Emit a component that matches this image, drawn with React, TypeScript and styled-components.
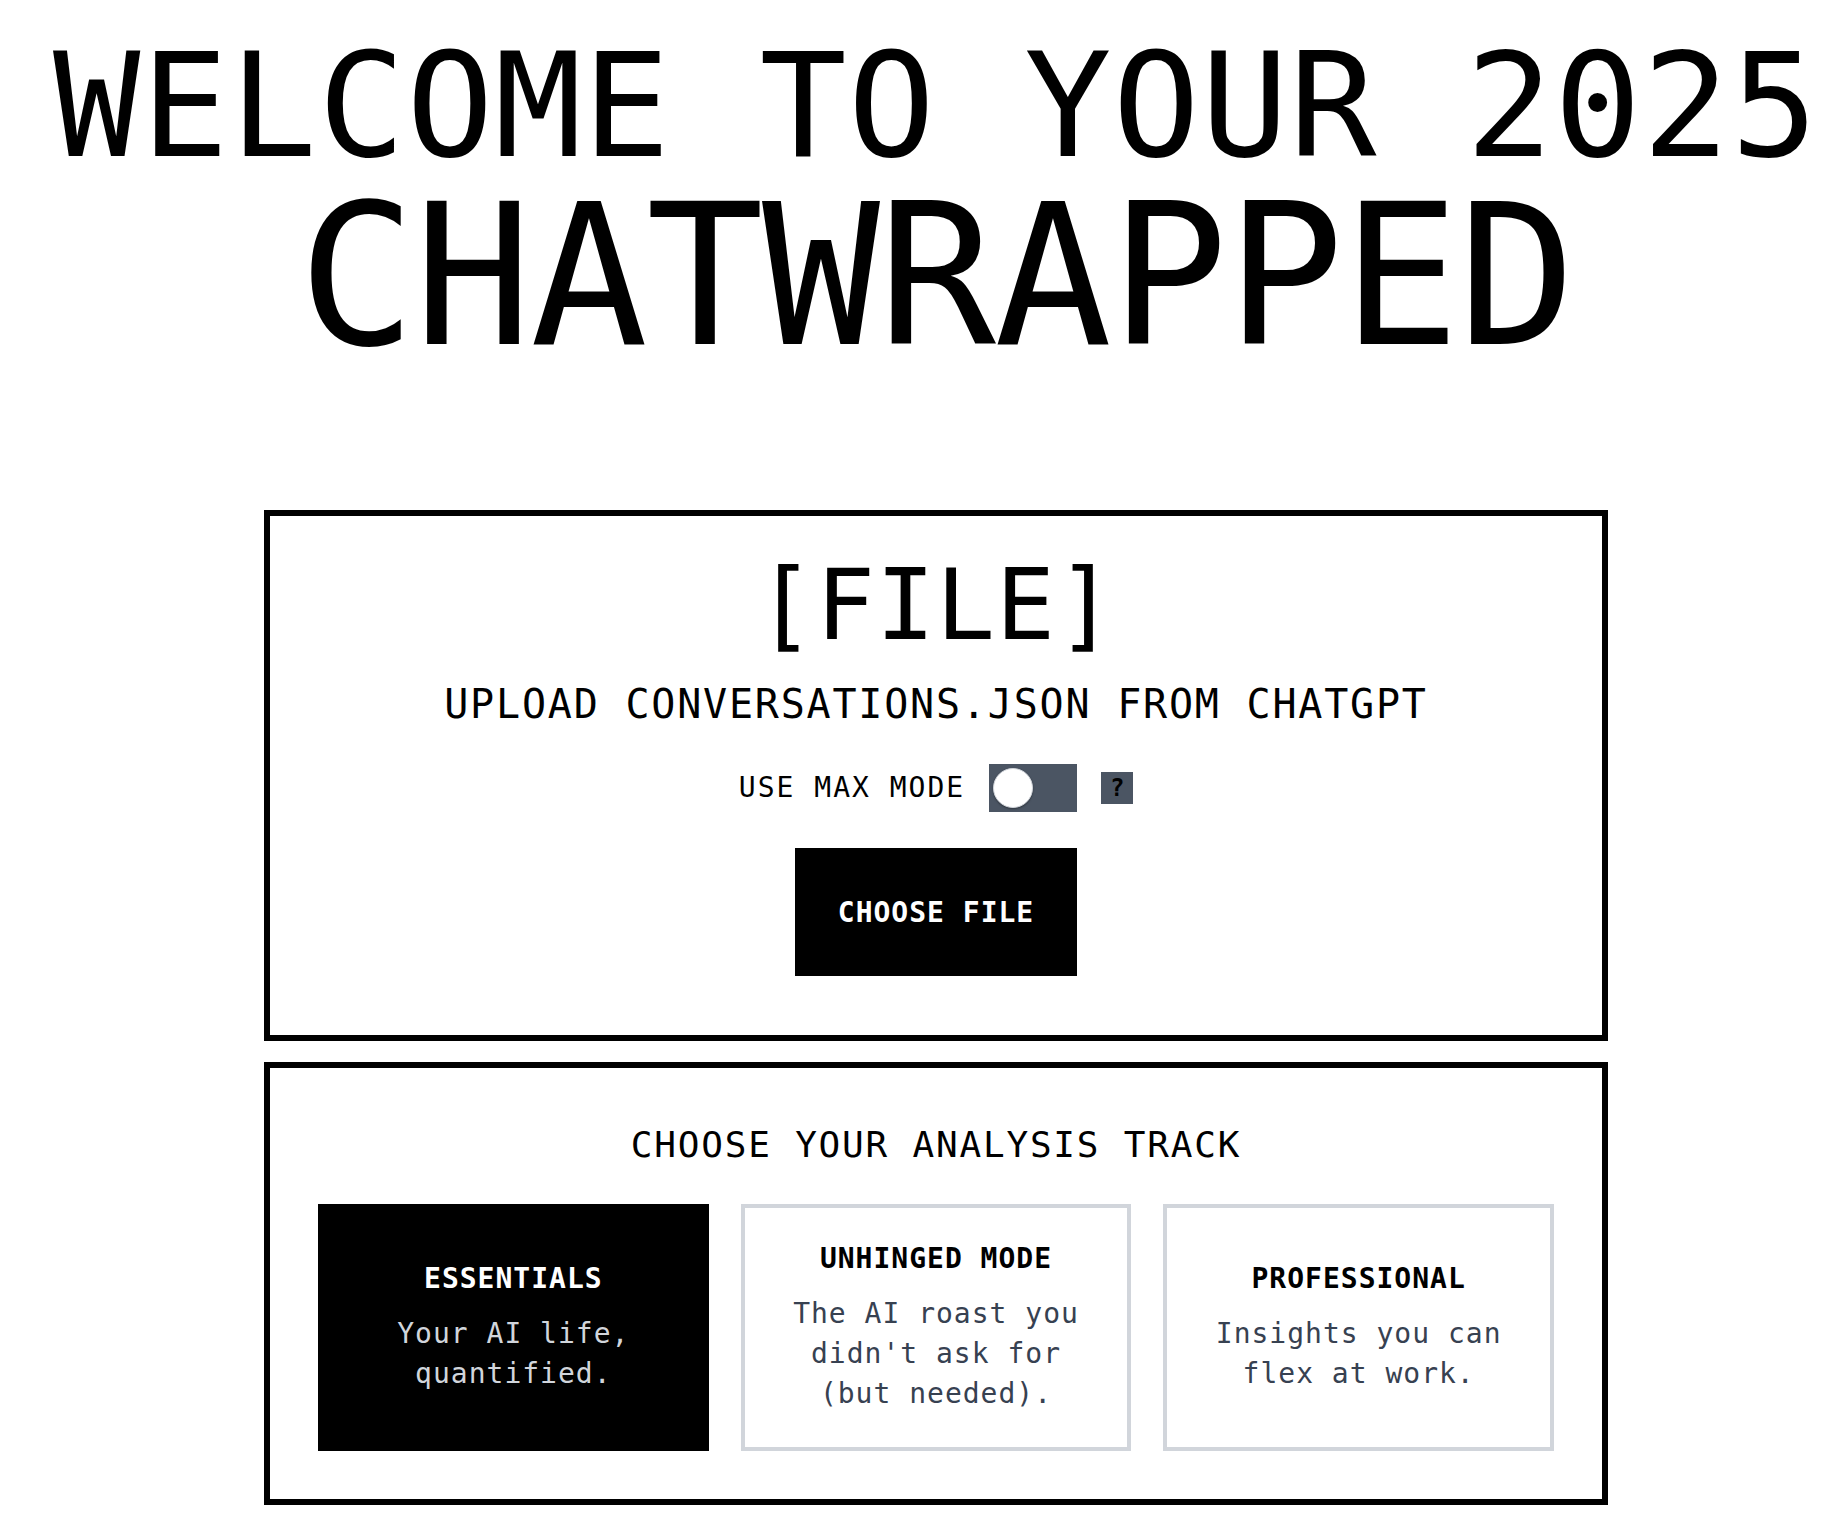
import React from "react";
import styled, { createGlobalStyle } from "styled-components";

const GlobalStyle = createGlobalStyle`
  html, body {
    margin: 0;
    padding: 0;
    background: #ffffff;
  }
  body {
    font-family: "DejaVu Sans Mono", "Liberation Mono", monospace;
    color: #000000;
  }
  * { box-sizing: border-box; }
`;

const Page = styled.div`
  display: flex;
  flex-direction: column;
  align-items: center;
  padding: 35px 0 17px 38px;
`;

const Title = styled.h1`
  margin: 0;
  font-weight: 400;
  text-align: center;
  white-space: nowrap;
  display: flex;
  flex-direction: column;
  align-items: center;
  gap: 2px;
`;

const TitleLine = styled.span<{ $size: number; $spacing: number; $lh: number }>`
  display: block;
  font-size: ${(p) => p.$size}px;
  line-height: ${(p) => p.$lh}px;
  letter-spacing: ${(p) => p.$spacing}px;
`;

const Main = styled.main`
  width: 1344px;
  margin-top: 136px;
  display: flex;
  flex-direction: column;
  gap: 21px;
`;

const Panel = styled.section<{ $pad: string }>`
  border: 6px solid #000;
  padding: ${(p) => p.$pad};
  display: flex;
  flex-direction: column;
  align-items: center;
  text-align: center;
`;

const FileGlyph = styled.div`
  font-size: 98px;
  line-height: 1;
  letter-spacing: 1px;
`;

const UploadText = styled.p`
  margin: 20px 0 0;
  font-size: 40px;
  line-height: 60px;
  letter-spacing: 1.8px;
`;

const ModeRow = styled.div`
  margin-top: 30px;
  display: flex;
  align-items: center;
  gap: 24px;
`;

const ModeLabel = styled.span`
  font-size: 28px;
  line-height: 1;
  letter-spacing: 2px;
`;

const Toggle = styled.button`
  width: 88px;
  height: 48px;
  padding: 0 4px;
  border: none;
  background: #4b5563;
  display: flex;
  align-items: center;
  cursor: pointer;
`;

const Knob = styled.span`
  width: 40px;
  height: 40px;
  border-radius: 50%;
  background: #ffffff;
  border: 1px solid #d1d5db;
  box-shadow: 0 1px 2px rgba(0, 0, 0, 0.35);
`;

const HelpBadge = styled.span`
  width: 32px;
  height: 32px;
  background: #4b5563;
  color: #000;
  display: flex;
  align-items: center;
  justify-content: center;
  font-size: 24px;
  font-weight: 700;
  line-height: 1;
`;

const ChooseButton = styled.button`
  margin-top: 36px;
  height: 128px;
  padding: 0 43px;
  border: none;
  background: #000;
  color: #fff;
  font-family: inherit;
  font-size: 28px;
  font-weight: 700;
  letter-spacing: 1px;
  cursor: pointer;
`;

const SectionHeading = styled.h2`
  margin: 0;
  font-weight: 400;
  font-size: 36px;
  line-height: 54px;
  letter-spacing: 1.8px;
`;

const TrackGrid = styled.div`
  margin-top: 32px;
  width: 100%;
  display: grid;
  grid-template-columns: repeat(3, 1fr);
  gap: 32px;
`;

const TrackCard = styled.button<{ $active?: boolean }>`
  border: 4px solid ${(p) => (p.$active ? "#000" : "#d1d5db")};
  background: ${(p) => (p.$active ? "#000" : "#fff")};
  color: ${(p) => (p.$active ? "#fff" : "#000")};
  padding: 33px 24px;
  display: flex;
  flex-direction: column;
  align-items: center;
  justify-content: center;
  text-align: center;
  font-family: inherit;
  cursor: pointer;
`;

const TrackTitle = styled.span`
  font-size: 28px;
  line-height: 36px;
  font-weight: 700;
  letter-spacing: 1px;
`;

const TrackDesc = styled.span<{ $active?: boolean }>`
  margin-top: 17px;
  font-size: 28px;
  line-height: 40px;
  letter-spacing: 1px;
  color: ${(p) => (p.$active ? "#d1d5db" : "#374151")};
`;

const tracks = [
  { title: "ESSENTIALS", desc: "Your AI life, quantified.", active: true },
  { title: "UNHINGED MODE", desc: "The AI roast you didn't ask for (but needed).", active: false },
  { title: "PROFESSIONAL", desc: "Insights you can flex at work.", active: false },
];

export default function App() {
  return (
    <>
      <GlobalStyle />
      <Page>
        <Title>
          <TitleLine $size={145} $spacing={1} $lh={141}>WELCOME TO YOUR 2025</TitleLine>
          <TitleLine $size={196} $spacing={-2} $lh={196}>CHATWRAPPED</TitleLine>
        </Title>
        <Main>
          <Panel $pad="40px 48px 59px">
            <FileGlyph>[FILE]</FileGlyph>
            <UploadText>UPLOAD CONVERSATIONS.JSON FROM CHATGPT</UploadText>
            <ModeRow>
              <ModeLabel>USE MAX MODE</ModeLabel>
              <Toggle aria-label="Use max mode">
                <Knob />
              </Toggle>
              <HelpBadge>?</HelpBadge>
            </ModeRow>
            <ChooseButton>CHOOSE FILE</ChooseButton>
          </Panel>
          <Panel $pad="50px 48px 48px">
            <SectionHeading>CHOOSE YOUR ANALYSIS TRACK</SectionHeading>
            <TrackGrid>
              {tracks.map((t) => (
                <TrackCard key={t.title} $active={t.active}>
                  <TrackTitle>{t.title}</TrackTitle>
                  <TrackDesc $active={t.active}>{t.desc}</TrackDesc>
                </TrackCard>
              ))}
            </TrackGrid>
          </Panel>
        </Main>
      </Page>
    </>
  );
}
